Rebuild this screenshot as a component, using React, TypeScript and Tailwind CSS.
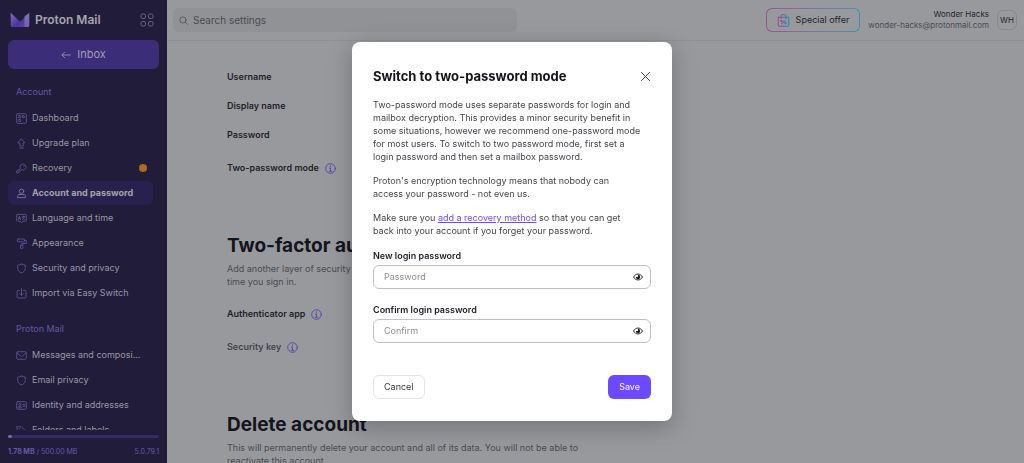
import type { ReactNode } from 'react';
import clsx from 'clsx';

const ICONS: Record<string, ReactNode> = {
  dashboard: (
    <>
      <rect x="1" y="1" width="14" height="14" rx="1.5" />
      <rect x="4" y="4" width="3" height="3" rx="0.5" />
      <rect x="9.5" y="4" width="2.5" height="3" rx="0.5" />
      <rect x="4" y="9.5" width="3" height="3" rx="0.5" />
    </>
  ),
  upgrade: <path d="M8 1.5 13 7h-2.5v4.5h-5V7H3zM5 14.5h6" />,
  key: (
    <>
      <path d="M6.2 8.2A4.4 4.4 0 1 1 8 9.9L6.5 11.3H5v1.5H3.5v1.7H1v-2.6z" />
      <path d="M11 4.5h.6" />
    </>
  ),
  user: (
    <>
      <circle cx="8" cy="4.8" r="3.2" />
      <path d="M4.5 9.5h7c1.5 0 2.5 2 2.5 4.5H2c0-2.5 1-4.5 2.5-4.5z" />
    </>
  ),
  language: (
    <>
      <path d="M2 2h12a1 1 0 0 1 1 1v8a1 1 0 0 1-1 1h-4l-2 2.5L6 12H2a1 1 0 0 1-1-1V3a1 1 0 0 1 1-1z" />
      <path d="m3.5 9.5 1.6-5 1.6 5M4.2 8h1.9M9 5.5h4M11 4.5v1M12.3 5.5c-.4 2-1.6 3.2-3 4M9.700 6.500c.5 1.500 1.700 2.500 3 3" />
    </>
  ),
  appearance: (
    <>
      <rect x="2" y="1.5" width="10.5" height="4" rx="1" />
      <path d="M12.5 3.5H15V8H8.5v2M7 10h3v5H7z" />
    </>
  ),
  shield: <path d="M8 1.5c2 1 3.8 1.5 5.5 1.5v5c0 3-2.3 5.2-5.5 6.5C4.8 13.2 2.5 11 2.5 8V3C4.2 3 6 2.5 8 1.5z" />,
  importBox: (
    <path d="M5 3.5H3A1.5 1.5 0 0 0 1.5 5v8A1.5 1.5 0 0 0 3 14.5h10a1.5 1.5 0 0 0 1.5-1.5V5A1.5 1.5 0 0 0 13 3.5h-2M8 1v9.5M5.5 8 8 10.5 10.5 8" />
  ),
  envelope: (
    <>
      <rect x="1" y="2.5" width="14" height="11" rx="1.5" />
      <path d="m1.5 4.5 5.3 4.3a2 2 0 0 0 2.4 0l5.3-4.3" />
    </>
  ),
  card: (
    <>
      <rect x="1" y="2.5" width="14" height="11" rx="1.5" />
      <circle cx="5.5" cy="6.5" r="1.5" />
      <path d="M3 11c0-1.5 1-2 2.5-2S8 9.5 8 11zM10 6.5h3M10 9h3" />
    </>
  ),
  tag: (
    <>
      <path d="M1.5 2.5h6.3l6.7 6.7-5.3 5.3L2.5 8z" />
      <path d="M5 5.5h.8" />
    </>
  ),
  search: (
    <>
      <circle cx="7" cy="7" r="5.5" />
      <path d="m11 11 4 4" />
    </>
  ),
  arrowLeft: <path d="M15 8H1.5M6 3.5 1.5 8 6 12.5" />,
  info: (
    <>
      <circle cx="8" cy="8" r="7" />
      <path d="M8 4v1.4M6.5 7.5H8V12M6 12h4" />
    </>
  ),
  close: <path d="m2 2 12 12M14 2 2 14" />,
};

function Icon({ name, className }: { name: string; className?: string }) {
  return (
    <svg
      viewBox="0 0 16 16"
      fill="none"
      stroke="currentColor"
      strokeWidth="1.3"
      strokeLinecap="round"
      strokeLinejoin="round"
      className={clsx('shrink-0', className)}
      aria-hidden="true"
    >
      {ICONS[name]}
    </svg>
  );
}

interface NavItem {
  icon: string;
  label: string;
  active?: boolean;
  badge?: boolean;
}

const ACCOUNT_ITEMS: NavItem[] = [
  { icon: 'dashboard', label: 'Dashboard' },
  { icon: 'upgrade', label: 'Upgrade plan' },
  { icon: 'key', label: 'Recovery', badge: true },
  { icon: 'user', label: 'Account and password', active: true },
  { icon: 'language', label: 'Language and time' },
  { icon: 'appearance', label: 'Appearance' },
  { icon: 'shield', label: 'Security and privacy' },
  { icon: 'importBox', label: 'Import via Easy Switch' },
];

const MAIL_ITEMS: NavItem[] = [
  { icon: 'envelope', label: 'Messages and composi...' },
  { icon: 'shield', label: 'Email privacy' },
  { icon: 'card', label: 'Identity and addresses' },
  { icon: 'tag', label: 'Folders and labels' },
];

function NavSection({ title, items }: { title: string; items: NavItem[] }) {
  return (
    <section>
      <h2 className="px-2 py-1 leading-4 text-[#6459a3]">{title}</h2>
      <ul className="mt-[2px] flex flex-col gap-px">
        {items.map((item) => (
          <li key={item.label}>
            <a
              href="#"
              className={clsx(
                'flex h-6 items-center gap-[5px] rounded-md px-2 whitespace-nowrap',
                item.active ? 'bg-[#28214d] font-bold text-[#a3a1ad]' : 'text-[#9997a5]'
              )}
            >
              <Icon
                name={item.icon}
                className={clsx('size-[11px]', item.active ? 'text-[#7d79a0]' : 'text-[#5d548e]')}
              />
              {item.label}
              {item.badge && <span className="mr-[-2px] ml-auto size-2 shrink-0 rounded-full bg-[#a86c17]" />}
            </a>
          </li>
        ))}
      </ul>
    </section>
  );
}

function Logo() {
  return (
    <a href="#" className="flex items-center gap-[5px] text-[#a5a4ae]">
      <svg viewBox="0 0 20 16" className="h-4 w-5" aria-hidden="true">
        <defs>
          <linearGradient id="flap" x1="0" y1="0" x2="1" y2="1">
            <stop offset="0" stopColor="#8a70b8" />
            <stop offset="0.6" stopColor="#4c35a2" />
            <stop offset="1" stopColor="#5a45a6" />
          </linearGradient>
          <linearGradient id="side" x1="0" y1="0" x2="0" y2="1">
            <stop offset="0" stopColor="#8272b3" />
            <stop offset="1" stopColor="#7161ab" />
          </linearGradient>
        </defs>
        <path d="M.7.8v12.7A1.5 1.5 0 0 0 2.2 15H15V5l-4 3.7a1.5 1.5 0 0 1-2 0z" fill="url(#flap)" />
        <path d="m14.5 4.5 4.8-3.7v12.7a1.5 1.5 0 0 1-1.5 1.5h-3.3z" fill="url(#side)" />
      </svg>
      <span className="text-[12px] leading-4 font-semibold">Proton Mail</span>
    </a>
  );
}

function Sidebar() {
  return (
    <aside className="flex w-[167px] shrink-0 flex-col bg-[#211c3a]">
      <div className="flex h-10 items-center justify-between pr-[13px] pl-[10px]">
        <Logo />
        <button type="button" aria-label="Proton apps" className="text-[#6b6288]">
          <svg viewBox="0 0 14 14" fill="none" stroke="currentColor" className="size-[14px]">
            <rect x="1" y="1" width="4.5" height="4.5" rx="1.5" />
            <rect x="8.5" y="1" width="4.5" height="4.5" rx="1.5" />
            <rect x="1" y="8.5" width="4.5" height="4.5" rx="1.5" />
            <rect x="8.5" y="8.5" width="4.5" height="4.5" rx="1.5" />
          </svg>
        </button>
      </div>
      <div className="px-2">
        <a
          href="#"
          className="flex h-[29px] items-center justify-center gap-[6px] rounded-md bg-[#3c2d78] text-[11px] text-[#a19bb8]"
        >
          <Icon name="arrowLeft" className="size-[10px]" />
          Inbox
        </a>
      </div>
      <nav className="mt-[11px] flex min-h-0 flex-1 flex-col gap-3 overflow-hidden pr-[14px] pl-2">
        <NavSection title="Account" items={ACCOUNT_ITEMS} />
        <NavSection title="Proton Mail" items={MAIL_ITEMS} />
      </nav>
      <div className="px-2 pt-[5px] pb-[5px]">
        <div className="h-[3px] rounded-full bg-[#352a64]">
          <div className="h-[3px] w-1 rounded-full bg-[#746ba3]" />
        </div>
        <div className="mt-2 flex justify-between text-[7px] leading-3 text-[#6459a3]">
          <span>
            <b>1.78 MB</b> / 500.00 MB
          </span>
          <span>5.0.79.1</span>
        </div>
      </div>
    </aside>
  );
}

function Header() {
  return (
    <header className="flex h-[41px] shrink-0 items-center justify-between border-b border-[#8f9094] pr-[7px] pl-[6px]">
      <label className="flex h-6 w-[344px] items-center gap-[5px] rounded-md bg-[#919296] px-[6px] text-[10px] text-[#4b4b50]">
        <Icon name="search" className="size-[9px]" />
        <input
          type="search"
          aria-label="Search settings"
          placeholder="Search settings"
          className="min-w-0 flex-1 bg-transparent outline-none placeholder:text-[#4b4b50]"
        />
      </label>
      <div className="flex items-center gap-2">
        <div className="rounded-md bg-linear-to-r from-[#a04f8e] to-[#3b8fae] p-px">
          <button
            type="button"
            className="flex h-[22px] items-center gap-[6px] rounded-[5px] bg-[#98999d] px-[10px] text-[#25252b]"
          >
            <svg
              viewBox="0 0 16 16"
              fill="none"
              stroke="url(#offer)"
              strokeWidth="1.3"
              className="size-[13px]"
              aria-hidden="true"
            >
              <defs>
                <linearGradient id="offer" gradientUnits="userSpaceOnUse" x1="1" y1="0" x2="15" y2="0">
                  <stop offset="0" stopColor="#a83f93" />
                  <stop offset="1" stopColor="#2589b0" />
                </linearGradient>
              </defs>
              <path d="M1.5 4h13v9.5a1.5 1.5 0 0 1-1.5 1.5H3a1.5 1.5 0 0 1-1.5-1.5zM5 6V2.5A1.5 1.5 0 0 1 6.5 1h3A1.5 1.5 0 0 1 11 2.5V6" />
              <path d="m10.500 7.500-5 5" />
              <circle cx="5.5" cy="8.5" r="0.9" />
              <circle cx="10.5" cy="11.5" r="0.9" />
            </svg>
            Special offer
          </button>
        </div>
        <div className="text-right text-[8px] leading-[11px]">
          <div className="text-[#25252b]">Wonder Hacks</div>
          <div className="text-[#4b4b50]">wonder-hacks@protonmail.com</div>
        </div>
        <button
          type="button"
          aria-label="Account menu for WH"
          className="size-5 rounded-md border border-[#88898d] text-[8px] text-[#25252b]"
        >
          WH
        </button>
      </div>
    </header>
  );
}

function SettingLabel({ children, info, muted }: { children: ReactNode; info?: boolean; muted?: boolean }) {
  return (
    <div
      className={clsx(
        'flex items-center gap-[6px] leading-4 font-semibold',
        muted ? 'text-[#45454b]' : 'text-[#1f1f28]'
      )}
    >
      {children}
      {info && <Icon name="info" className="mt-px size-[11px] text-[#5641a8]" />}
    </div>
  );
}

function Section({ title, text, children }: { title: string; text: string; children?: ReactNode }) {
  return (
    <section>
      <h2 className="text-[19px] leading-6 font-bold text-[#14141c]">{title}</h2>
      <p className="mt-1 max-w-[392px] leading-[13px] text-[#4b4b50]">{text}</p>
      {children}
    </section>
  );
}

function Settings() {
  return (
    <main className="min-h-0 flex-1 overflow-hidden px-[60px] pt-7">
      <div className="flex flex-col gap-[13px]">
        <SettingLabel>Username</SettingLabel>
        <SettingLabel>Display name</SettingLabel>
        <SettingLabel>Password</SettingLabel>
      </div>
      <div className="mt-[17px] mb-[58px]">
        <SettingLabel info>Two-password mode</SettingLabel>
      </div>
      <Section
        title="Two-factor authentication"
        text="Add another layer of security to your account. You’ll need to verify yourself with 2FA every time you sign in."
      >
        <div className="mt-[18px] mb-[58px] flex flex-col gap-[17px]">
          <SettingLabel info>Authenticator app</SettingLabel>
          <SettingLabel info muted>
            Security key
          </SettingLabel>
        </div>
      </Section>
      <Section
        title="Delete account"
        text="This will permanently delete your account and all of its data. You will not be able to reactivate this account."
      />
    </main>
  );
}

function PasswordField({ id, label, placeholder }: { id: string; label: string; placeholder: string }) {
  return (
    <div>
      <label htmlFor={id} className="block leading-4 font-semibold text-[#1c1c24]">
        {label}
      </label>
      <div className="mt-px flex h-6 items-center rounded-md border border-[#c2c1c0] pr-[7px] pl-[10px]">
        <input
          id={id}
          type="password"
          placeholder={placeholder}
          className="min-w-0 flex-1 outline-none placeholder:text-[#8f8d8a]"
        />
        <button type="button" aria-label="Reveal password" className="text-[#1c1c24]">
          <svg viewBox="0 0 16 16" className="size-[10px]" aria-hidden="true">
            <path
              d="M.8 8C2.5 5 5 3.3 8 3.3S13.5 5 15.2 8C13.5 11 11 12.7 8 12.7S2.5 11 .8 8z"
              fill="none"
              stroke="currentColor"
              strokeWidth="1.5"
            />
            <path d="M8 4.5A3.5 3.5 0 1 1 4.5 8H8z" fill="currentColor" />
          </svg>
        </button>
      </div>
    </div>
  );
}

function TwoPasswordDialog() {
  return (
    <div className="fixed inset-0 flex items-center justify-center">
      <form
        role="dialog"
        aria-modal="true"
        aria-labelledby="dialog-title"
        className="w-80 rounded-lg bg-white px-[21px] pt-6 pb-[22px] text-[#45454b] shadow-[0_6px_24px_rgba(0,0,0,0.25)]"
        onSubmit={(e) => e.preventDefault()}
      >
        <div className="flex items-center justify-between">
          <h1 id="dialog-title" className="text-[13px] leading-5 font-bold text-[#14141c]">
            Switch to two-password mode
          </h1>
          <button type="button" aria-label="Close" className="text-[#33333a]">
            <Icon name="close" className="size-[11px]" />
          </button>
        </div>
        <div className="mt-3 flex flex-col gap-[11px] pr-[10px] leading-[13px]">
          <p>
            Two-password mode uses separate passwords for login and mailbox decryption. This provides a minor security
            benefit in some situations, however we recommend one-password mode for most users. To switch to two password
            mode, first set a login password and then set a mailbox password.
          </p>
          <p>Proton's encryption technology means that nobody can access your password - not even us.</p>
          <p>
            Make sure you{' '}
            <a href="#" className="text-[#6d4aff] underline">
              add a recovery method
            </a>{' '}
            so that you can get back into your account if you forget your password.
          </p>
        </div>
        <div className="mt-[11px] flex flex-col gap-[13px]">
          <PasswordField id="new-password" label="New login password" placeholder="Password" />
          <PasswordField id="confirm-password" label="Confirm login password" placeholder="Confirm" />
        </div>
        <div className="mt-8 flex justify-between">
          <button type="button" className="h-6 rounded-md border border-[#e5e4e2] px-[10px] text-[#33333a]">
            Cancel
          </button>
          <button type="submit" className="h-6 rounded-md bg-[#6d4aff] px-[11px] text-white">
            Save
          </button>
        </div>
      </form>
    </div>
  );
}

export default function App() {
  return (
    <div className="flex h-screen bg-[#98999d] font-['Inter',sans-serif] text-[9px]">
      <Sidebar />
      <div className="flex min-w-0 flex-1 flex-col">
        <Header />
        <Settings />
      </div>
      <TwoPasswordDialog />
    </div>
  );
}
